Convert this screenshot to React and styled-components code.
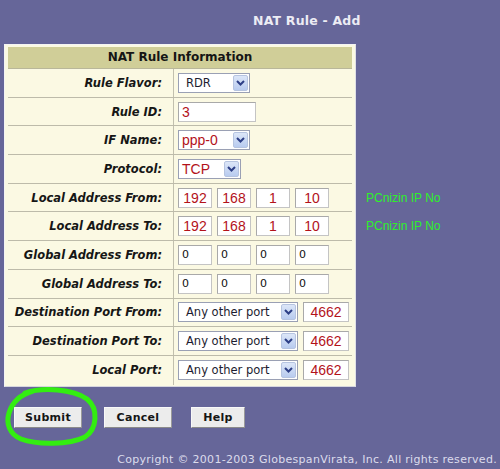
import styled, { createGlobalStyle } from "styled-components";

const GlobalStyle = createGlobalStyle`
    html, body {
        margin: 0;
        padding: 0;
        background: #666699;
        font-family: "DejaVu Sans", Verdana, sans-serif;
    }
`

const Page = styled.div`
    position: relative;
    width: 500px;
    height: 469px;
    overflow: hidden;
`

const Title = styled.h1`
    margin: 0;
    padding: 13px 0 0 253px;
    height: 44px;
    box-sizing: border-box;
    font-size: 12.5px;
    font-weight: bold;
    color: #ececf4;
    letter-spacing: 0.2px;
`

const Body = styled.div`
    display: flex;
    align-items: flex-start;
`

const Panel = styled.div`
    margin-left: 4px;
    width: 352px;
    box-sizing: border-box;
    padding: 2px 3px 1px 3px;
    background: #fbf9e3;
    border: 1px solid #f4f4f4;
    border-right-color: #e0e0e6;
    border-bottom-color: #d6d6de;
`

const Header = styled.div`
    height: 21px;
    line-height: 21px;
    background: #d0ce98;
    text-align: center;
    font-size: 12px;
    font-weight: bold;
    color: #151515;
    border-bottom: 1px solid #b9b79a;
`

const Row = styled.div`
    display: grid;
    grid-template-columns: 166px 1fr;
    height: 28.7px;
    box-sizing: border-box;
    border-bottom: ${(p) => (p.last ? "none" : "1.5px solid #bdbbaa")};
`

const Label = styled.div`
    display: flex;
    align-items: center;
    justify-content: flex-end;
    padding-right: 11px;
    border-right: 1.5px solid #c2c0ae;
    font-size: 11.5px;
    font-weight: bold;
    font-style: italic;
    color: #161616;
    white-space: nowrap;
`

const Field = styled.div`
    display: flex;
    align-items: center;
    gap: ${(p) => p.gap || 5}px;
    padding-left: 4px;
`

const Box = styled.div`
    width: ${(p) => p.w}px;
    height: 20px;
    box-sizing: border-box;
    background: #fff;
    border: 1.5px solid #a9a9a9;
    border-right-color: #c4c4c4;
    border-bottom-color: #c4c4c4;
    display: flex;
    align-items: center;
    justify-content: ${(p) => (p.center ? "center" : "flex-start")};
    padding-left: ${(p) => (p.center ? 0 : 3)}px;
    font-family: ${(p) => (p.red ? '"Liberation Sans", Arial, sans-serif' : '"DejaVu Sans", sans-serif')};
    font-size: ${(p) => (p.red ? 14 : 11)}px;
    color: ${(p) => (p.red ? "#b3121a" : "#111")};
`

const Select = styled.div`
    width: ${(p) => p.w}px;
    height: 20px;
    box-sizing: border-box;
    background: #fff;
    border: 1px solid #9aa0b4;
    display: flex;
    align-items: center;
    justify-content: space-between;
    padding: 0 1px 0 ${(p) => (p.red ? 3 : 7)}px;
    font-family: ${(p) => (p.red ? '"Liberation Sans", Arial, sans-serif' : '"DejaVu Sans", sans-serif')};
    font-size: ${(p) => (p.red ? 14 : 11.5)}px;
    color: ${(p) => (p.red ? "#b3121a" : "#1c1c30")};
`

const Arrow = styled.span`
    width: 15px;
    height: 16px;
    display: flex;
    align-items: center;
    justify-content: center;
    background: linear-gradient(#dce6f8, #b8cbef);
    border: 1px solid #b6c4e0;
    border-radius: 2px;
    box-sizing: border-box;
`

const Note = styled.div`
    display: flex;
    flex-direction: column;
    gap: 14px;
    margin: 147px 0 0 10px;
    font-family: "Liberation Sans", Arial, sans-serif;
    font-size: 12px;
    color: #2ef02a;
`

const Buttons = styled.div`
    display: flex;
    align-items: center;
    padding: 20px 0 0 14px;
`

const Button = styled.button`
    width: ${(p) => p.w}px;
    height: 21px;
    margin-right: ${(p) => p.mr || 0}px;
    padding: 0;
    background: #ececec;
    border: 1px solid #f8f8f8;
    border-right-color: #9a9a9a;
    border-bottom-color: #8a8a8a;
    font-family: "DejaVu Sans", sans-serif;
    font-size: 11px;
    font-weight: bold;
    color: #151515;
    letter-spacing: 0.3px;
`

const Copyright = styled.div`
    padding: 25px 3px 0 0;
    text-align: right;
    font-size: 11px;
    color: #dcdcec;
    letter-spacing: 0.3px;
    white-space: nowrap;
`

const Scribble = styled.svg`
    position: absolute;
    left: 3px;
    top: 385px;
    pointer-events: none;
`

function Chevron() {
    return (
        <svg width="9" height="6" viewBox="0 0 9 6">
            <path d="M1 1 L4.5 4.5 L8 1" fill="none" stroke="#2d3f86" strokeWidth="2" />
        </svg>
    );
}

function Dropdown({ w, red, children }) {
    return (
        <Select w={w} red={red}>
            <span>{children}</span>
            <Arrow><Chevron /></Arrow>
        </Select>
    );
}

function Ip({ parts, red }) {
    return (
        <Field>
            {parts.map((p, i) => (
                <Box key={i} w={34} red={red} center={red}>{p}</Box>
            ))}
        </Field>
    );
}

const rows = [
    ["Rule Flavor:", <Field><Dropdown w={72}>RDR</Dropdown></Field>],
    ["Rule ID:", <Field><Box w={78} red>3</Box></Field>],
    ["IF Name:", <Field><Dropdown w={72} red>ppp-0</Dropdown></Field>],
    ["Protocol:", <Field><Dropdown w={63} red>TCP</Dropdown></Field>],
    ["Local Address From:", <Ip parts={["192", "168", "1", "10"]} red />],
    ["Local Address To:", <Ip parts={["192", "168", "1", "10"]} red />],
    ["Global Address From:", <Ip parts={["0", "0", "0", "0"]} />],
    ["Global Address To:", <Ip parts={["0", "0", "0", "0"]} />],
    ["Destination Port From:", <Field><Dropdown w={120}>Any other port</Dropdown><Box w={46} red center>4662</Box></Field>],
    ["Destination Port To:", <Field><Dropdown w={120}>Any other port</Dropdown><Box w={46} red center>4662</Box></Field>],
    ["Local Port:", <Field><Dropdown w={120}>Any other port</Dropdown><Box w={46} red center>4662</Box></Field>],
];

export default function App() {
    return (
        <Page>
            <GlobalStyle />
            <Title>NAT Rule - Add</Title>
            <Body>
                <Panel>
                    <Header>NAT Rule Information</Header>
                    {rows.map(([label, field], i) => (
                        <Row key={label} last={i === rows.length - 1}>
                            <Label>{label}</Label>
                            {field}
                        </Row>
                    ))}
                </Panel>
                <Note>
                    <span>PCnizin IP No</span>
                    <span>PCnizin IP No</span>
                </Note>
            </Body>
            <Buttons>
                <Button w={68} mr={22}>Submit</Button>
                <Button w={68} mr={19}>Cancel</Button>
                <Button w={54}>Help</Button>
            </Buttons>
            <Copyright>Copyright © 2001-2003 GlobespanVirata, Inc. All rights reserved.</Copyright>
            <Scribble width="100" height="62" viewBox="0 0 100 62">
                <path
                    d="M22 8 C40 2 70 4 84 14 C96 24 94 44 82 52 C66 60 34 60 18 54 C6 49 3 38 6 28 C9 18 16 10 30 6"
                    fill="none"
                    stroke="#33ee11"
                    strokeWidth="5"
                    strokeLinecap="round"
                />
            </Scribble>
        </Page>
    );
}
